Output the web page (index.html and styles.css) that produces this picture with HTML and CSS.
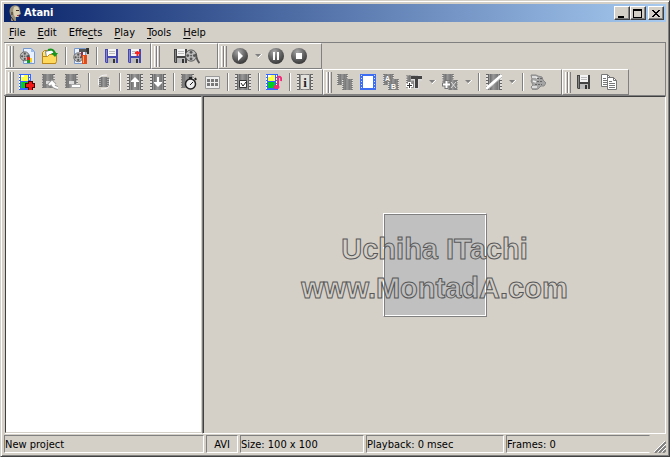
FILE: index.html
```html
<!DOCTYPE html>
<html lang="en">
<head>
<meta charset="utf-8">
<title>Atani</title>
<link rel="stylesheet" href="styles.css">
</head>
<body>
<svg class="defs" aria-hidden="true">
  <defs>
    <linearGradient id="metal"><stop stop-color="#6c6c6c"/><stop offset=".4" stop-color="#999"/><stop offset="1" stop-color="#747474"/></linearGradient>
    <radialGradient id="ball" cx=".4" cy=".25" r=".8"><stop stop-color="#aaa"/><stop offset=".5" stop-color="#686868"/><stop offset="1" stop-color="#333"/></radialGradient>
  </defs>
  <symbol id="film" viewBox="0 0 16 16">
    <path fill="#666" d="M0 0h16v16H0z"/><path fill="url(#metal)" d="M4 0h8v16H4z"/>
    <path stroke="#e4e2de" stroke-width="2" stroke-dasharray="2 1" d="M1 1v15M15 1v15"/>
    <path stroke="#ddd" d="M3.500 0v16M12.500 0v16" stroke-opacity=".4"/>
  </symbol>
  <symbol id="colorfilm" viewBox="0 0 16 16">
    <path fill="#36f" d="M0 0h13v16H0z"/><path fill="#ff4" d="M3 1h7v6H3z"/><path fill="#0c2" d="M3 8h7v6H3z"/>
    <path fill="#fff" d="M3 1h3v2H3z"/>
    <path stroke="#fff" stroke-dasharray="2 1" d="M1.500 1v14M11.500 1v14"/>
  </symbol>
  <symbol id="floppy" viewBox="0 0 16 16">
    <path fill="currentColor" d="M1 1h13v14H2l-1-1z"/><path fill="#f4f4f4" d="M4 1h8v7H4z"/>
    <path stroke="#bbb" d="M5 3.500h6M5 5.500h6"/><path fill="#bbb" d="M4 10h8v5H4z"/><path fill="#333" d="M9 11h2v4H9z"/>
    <path stroke="#fff" stroke-opacity=".35" d="M2.500 2v12"/>
  </symbol>
  <symbol id="reel" viewBox="0 0 16 16">
    <circle cx="7" cy="7" r="6" fill="#bbb" stroke="#555" stroke-width="1"/>
    <g fill="#555"><circle cx="7" cy="3.500" r="1.500"/><circle cx="3.500" cy="7" r="1.500"/><circle cx="10.500" cy="7" r="1.500"/><circle cx="7" cy="10.500" r="1.500"/><circle cx="7" cy="7" r="1"/></g>
    <path d="M12 5q1 7 4 10" stroke="#555" stroke-width="2" fill="none"/>
  </symbol>
  <symbol id="page" viewBox="0 0 16 16">
    <path fill="#fff" stroke="#777" d="M.5.5h6l3 3v9h-9z"/><path fill="none" stroke="#777" d="M6.500.5v3h3M2 4.500h3M2 6.500h6M2 8.500h6M2 10.500h6"/>
  </symbol>
</svg>

<div class="window">
  <header class="titlebar">
    <svg class="app-icon" viewBox="0 0 16 16" aria-hidden="true">
      <path fill="#99917c" d="M3 2Q6-1 10 1q2 1 2 4l1 4-2 1v2H8v4H3V11Q0 6 3 2"/>
      <path fill="#d9d0b4" d="M6 2q4-2 5 2l1 5-2 1v2H7Q4 7 6 2"/>
      <path stroke="#3c2c24" d="M8 5.500h3M3 12l3 4M4 7v3"/><path stroke="#b33" d="M9 10.500h2"/>
    </svg>
    <h1 class="title">Atani</h1>
    <button class="caption" aria-label="Minimize"><svg viewBox="0 0 13 11"><path stroke="#000" stroke-width="2" d="M3 9h6"/></svg></button>
    <button class="caption" aria-label="Maximize"><svg viewBox="0 0 13 11"><path fill="none" stroke="#000" d="M2.500 1.500h8v8h-8zM2 2.500h9"/></svg></button>
    <button class="caption close" aria-label="Close"><svg viewBox="0 0 13 11"><path fill="#000" d="M3 2h2v1h1v1h2V3h1V2h2v1h-1v1H9v1H8v1h1v1h1v1h1v1H9V8H8V7H6v1H5v1H3V8h1V7h1V6h1V5H5V4H4V3H3z"/></svg></button>
  </header>

  <nav class="menu">
    <button><u>F</u>ile</button><button><u>E</u>dit</button><button>Effe<u>c</u>ts</button><button><u>P</u>lay</button><button><u>T</u>ools</button><button><u>H</u>elp</button>
  </nav>

  <div class="toolbars">
    <div class="row">
      <div class="band file-band" role="toolbar" aria-label="Project">
        <button aria-label="New project"><svg viewBox="0 0 16 16"><path fill="#e7f1ff" stroke="#7798cc" d="M4.500.5h8l3 3v12h-11z"/><path fill="#9cbcf0" d="M12 0v4h4"/><use href="#reel" x="0" y="3" width="13" height="12"/><path fill="#e02020" d="M8 9h3v3H8z"/><path fill="#ffd21c" d="M11 10h2v4h-2z"/><path fill="#169b30" d="M8 12h3v3H8z"/></svg></button>
        <button aria-label="Open project"><svg viewBox="0 0 16 16"><path fill="#ffe578" stroke="#b48212" d="M.5 15.500v-11l2-2h4l1 2h6v11z"/><path fill="#fff" stroke="#789" d="M3.500 3.500l7-2 2 6-8 2z"/><path fill="#ffd95c" stroke="#ba8718" d="M.5 15.500v-7h5l2-2h7v7l-1 2z"/><path fill="none" stroke="#16961c" stroke-width="2" d="M6 2q6-2 7 4"/><path fill="#16961c" d="M9 5h7l-3 4z"/></svg></button>
        <i class="sep"></i>
        <button aria-label="Project settings"><svg viewBox="0 0 16 16"><path fill="#edf4ff" stroke="#7798cc" d="M1.500.5h11v15h-11z"/><use href="#reel" x="0" y="4" width="12" height="12"/><path stroke="#555" stroke-width="3" d="M6 2.500h8"/><path fill="#333" d="M13 0h3v6h-2z"/><path stroke="#934" stroke-width="2" d="M9 4v5"/><path fill="#e14b19" d="M9 7h5v9H9z"/><path stroke="#ffb078" d="M10.500 8v7"/></svg></button>
        <i class="sep"></i>
        <button class="blue" aria-label="Save"><svg viewBox="0 0 16 16"><use href="#floppy"/></svg></button>
        <button class="blue" aria-label="Save as"><svg viewBox="0 0 16 16"><use href="#floppy"/><path stroke="#f22" stroke-width="2" d="M8 5h5M10.500 3v5"/></svg></button>
      </div>
      <div class="band export-band" role="toolbar" aria-label="Export">
        <button class="wide" aria-label="Save movie"><svg viewBox="0 0 26 16"><use href="#floppy" x="-1" y="0" width="16" height="16"/><g transform="translate(10 1)"><use href="#reel" width="16" height="15"/></g></svg></button>
      </div>
      <div class="band play-band" role="toolbar" aria-label="Playback">
        <button aria-label="Play"><svg viewBox="0 0 16 16"><circle cx="8" cy="8" r="8" fill="url(#ball)"/><path fill="#fff" d="M6 3l5 5-5 5z"/></svg></button>
        <button class="drop" aria-label="Play options"><svg viewBox="0 0 7 4"><path fill="#808080" d="M0 0h6L3 3z"/><path stroke="#fff" d="M3 4l4-4"/></svg></button>
        <button aria-label="Pause"><svg viewBox="0 0 16 16"><circle cx="8" cy="8" r="8" fill="url(#ball)"/><path stroke="#fff" stroke-width="2" d="M6 4v8M10 4v8"/></svg></button>
        <button aria-label="Stop"><svg viewBox="0 0 16 16"><circle cx="8" cy="8" r="8" fill="url(#ball)"/><path fill="#fff" d="M5 5h6v6H5z"/></svg></button>
      </div>
    </div>
    <div class="row">
      <div class="band frames-band" role="toolbar" aria-label="Frames">
        <button aria-label="Add frame"><svg viewBox="0 0 16 16"><use href="#colorfilm" x="-1"/><path stroke="#500" stroke-width="5" d="M6 11.500h10M11.500 7v9"/><path stroke="#f01818" stroke-width="3" d="M7 11.500h8M11.500 8v8"/></svg></button>
        <button aria-label="Replace frame"><svg viewBox="0 0 16 16"><use href="#film" x="-1" width="14" height="14"/><path fill="#ddd" d="M4 7h6v3H4z"/><path stroke="#999" stroke-width="4" fill="none" d="M7 11l3-3 3 3M10 8q0 5 6 6"/><path stroke="#fff" stroke-width="2" fill="none" d="M7 11l3-3 3 3M10 8q0 5 6 6"/></svg></button>
        <button aria-label="Remove frame"><svg viewBox="0 0 16 16"><use href="#film" x="-1" width="14" height="14"/><path fill="#ddd" d="M4 7h5v3H4z"/><path fill="#fff" stroke="#aaa" d="M6.500 10.500h9v3h-9z"/></svg></button>
        <i class="sep"></i>
        <button aria-label="Rotate frames"><svg viewBox="0 0 16 16"><path fill="#777" d="M3 3h10v10H3z"/><path fill="url(#metal)" d="M5 3h6v10H5z"/><path stroke="#ddd" stroke-dasharray="1 1" d="M4 3v10M12 3v10"/><path fill="none" stroke="#f4f4f4" d="M3 4q1-3 8-3M13 12q-1 3-8 3M2.500 5v6M13.500 5v6"/></svg></button>
        <i class="sep"></i>
        <button aria-label="Move up"><svg viewBox="0 0 16 16"><use href="#film"/><path fill="#fff" d="M8 3l4 4v1H9v5H7V8H4V7z"/></svg></button>
        <button aria-label="Move down"><svg viewBox="0 0 16 16"><use href="#film"/><path fill="#fff" d="M7 3h2v5h3v1l-4 4-4-4V8h3z"/></svg></button>
        <i class="sep"></i>
        <button aria-label="Frame timing"><svg viewBox="0 0 16 16"><use href="#film" x="-1" width="14" height="14"/><path stroke="#222" stroke-width="2" d="M8 4h3M14 4l1 2"/><circle cx="9.500" cy="10" r="5" fill="#eee" stroke="#222" stroke-width="1.500"/><path stroke="#222" d="M9 11l3-3"/></svg></button>
        <button aria-label="Frame grid"><svg viewBox="0 0 16 16"><path fill="#eee" stroke="#999" d="M1.500 2.500h14v12h-14z"/><path stroke="#777" stroke-width="3" stroke-dasharray="3 1" d="M3 6.500h11M3 10.500h11"/></svg></button>
        <i class="sep"></i>
        <button aria-label="Select frames"><svg viewBox="0 0 16 16"><use href="#film"/><path fill="#fff" stroke="#333" d="M4.500 6.500h7v7h-7z"/><path fill="none" stroke="#222" d="M6 9l2 3 3-4"/></svg></button>
        <i class="sep"></i>
        <button aria-label="Sound"><svg viewBox="0 0 16 16"><use href="#colorfilm" x="-1"/><path fill="none" stroke="#f22878" stroke-width="2" d="M12 13V3q4-1 3 4"/><ellipse cx="10.500" cy="13" rx="3" ry="2" fill="#f22878"/></svg></button>
        <i class="sep"></i>
        <button aria-label="Frame information"><svg viewBox="0 0 16 16"><use href="#film"/><path fill="#e4e2dc" d="M4 1h8v14H4z"/><text class="info" x="8" y="13">i</text></svg></button>
      </div>
      <div class="band effects-band" role="toolbar" aria-label="Effects">
        <button aria-label="Duplicate"><svg viewBox="0 0 16 16"><use href="#film" width="11" height="11"/><use href="#film" x="5" y="5" width="11" height="11"/></svg></button>
        <button aria-label="Blank frame"><svg viewBox="0 0 16 16"><path fill="#3d6df2" d="M0 0h16v16H0z"/><path fill="#fff" d="M3 2h10v12H3z"/><path stroke="#d6e0ff" stroke-dasharray="1 2" d="M1.500 1v14M14.500 1v14"/></svg></button>
        <button aria-label="Transition"><svg viewBox="0 0 16 16"><use href="#film" width="11" height="11"/><use href="#film" x="5" y="5" width="11" height="11"/><text class="letter" x="2" y="7">A</text><text class="letter" x="8" y="15">B</text></svg></button>
        <button aria-label="Add text"><svg viewBox="0 0 16 16"><use href="#film" width="12" height="15"/><path stroke="#ddd" stroke-width="5" d="M5 4h11M10.500 3v12"/><path stroke="#444" stroke-width="3" d="M5 3.500h11M10.500 3v11"/><path stroke="#fff" stroke-width="3" d="M0 11.500h7M3.500 8v7"/><path stroke="#333" d="M1 11.500h5M3.500 9v5"/></svg></button>
        <button class="drop" aria-label="Text options"><svg viewBox="0 0 7 4"><path fill="#808080" d="M0 0h6L3 3z"/><path stroke="#fff" d="M3 4l4-4"/></svg></button>
        <button aria-label="Add effect"><svg viewBox="0 0 16 16"><use href="#film" width="12" height="12"/><use href="#film" x="6" y="6" width="10" height="10"/><path stroke="#777" stroke-width="4" d="M0 10.500h9M4.500 6v9"/><path stroke="#fff" stroke-width="2" d="M1 10.500h7M4.500 7v7"/><path stroke="#ddd" d="M9 8l5 6M14 8l-5 6"/></svg></button>
        <button class="drop" aria-label="Effect options"><svg viewBox="0 0 7 4"><path fill="#808080" d="M0 0h6L3 3z"/><path stroke="#fff" d="M3 4l4-4"/></svg></button>
        <i class="sep"></i>
        <button aria-label="Clear effect"><svg viewBox="0 0 16 16"><use href="#film"/><path stroke="#fff" stroke-width="3" d="M0 15L16 1"/><path stroke="#bbb" d="M1 16L16 3"/></svg></button>
        <button class="drop" aria-label="Clear options"><svg viewBox="0 0 7 4"><path fill="#808080" d="M0 0h6L3 3z"/><path stroke="#fff" d="M3 4l4-4"/></svg></button>
        <i class="sep"></i>
        <button aria-label="Palette"><svg viewBox="0 0 16 16"><path fill="#a4a4a4" stroke="#888" d="M1 1h5l2 1 4 1 1 3 3 3-2 3h-3l-3 3-5 1-2-3 2-2-2-4 1-2z"/><path stroke="#eee" stroke-width="1.500" fill="none" d="M2 3h4l2 2M3 7l3 1M2 13h5"/><path stroke="#666" stroke-dasharray="2 1" d="M7 4.500h5M7 7.500h6M5 10.500h7"/></svg></button>
      </div>
      <div class="band clipboard-band" role="toolbar" aria-label="Frame file">
        <button class="dark" aria-label="Save frame"><svg viewBox="0 0 16 16"><use href="#floppy"/></svg></button>
        <button aria-label="Copy frame"><svg viewBox="0 0 16 16"><use href="#page" width="16" height="16"/><use href="#page" x="6" y="3" width="16" height="16"/></svg></button>
      </div>
    </div>
  </div>

  <main class="workspace">
    <section class="frame-list" aria-label="Frame list"></section>
    <section class="stage" aria-label="Preview">
      <div class="canvas"></div>
      <p class="watermark">Uchiha ITachi<br>www.MontadA.com</p>
    </section>
  </main>

  <footer class="status">
    <span class="project">New project</span><span class="format">AVI</span><span class="size">Size: 100 x 100</span><span class="playback">Playback: 0 msec</span><span class="frames">Frames: 0</span>
    <svg class="grip" viewBox="0 0 12 12" aria-hidden="true"><path stroke="#808080" stroke-width="2" d="M1 12L12 1M5 12l7-7M9 12l3-3"/><path stroke="#fff" d="M0 11L11 0M4 11l8-8M8 11l4-4"/></svg>
  </footer>
</div>
</body>
</html>
```

FILE: styles.css
```css
:root {
  --face: #d4d0c8;
  --shadow: #808080;
  --dark: #404040;
}

* { box-sizing: border-box; }

body {
  margin: 0;
  background: var(--face);
  color: #000;
  font: 11px/14px "DejaVu Sans Condensed", "DejaVu Sans", sans-serif;
}

button {
  margin: 0;
  padding: 0;
  border: 0;
  background: none;
  color: inherit;
  font: inherit;
}

svg { display: block; }
.defs { position: absolute; width: 0; height: 0; }

.window {
  display: flex;
  flex-direction: column;
  height: 100vh;
  padding: 2px 2px 1px;
  border: 1px solid var(--dark);
  border-top-color: var(--face);
  border-left-color: var(--face);
  box-shadow: inset 1px 1px #fff, inset -1px -1px var(--shadow);
}

.titlebar {
  display: flex;
  align-items: center;
  height: 18px;
  margin: 1px 1px 0;
  padding-right: 2px;
  background: linear-gradient(90deg, #0a246a, #a6caf0);
}

.app-icon { width: 16px; height: 16px; margin: 0 0 0 4px; }

.title {
  flex: 1;
  margin: 0;
  color: #fff;
  font-size: 11px;
  font-weight: bold;
}

.caption {
  width: 16px;
  height: 14px;
  border: 1px solid var(--dark);
  border-top-color: #fff;
  border-left-color: #fff;
  background: var(--face);
  box-shadow: inset -1px -1px var(--shadow);
}

.caption svg { width: 13px; height: 11px; shape-rendering: crispEdges; }
.close { margin-left: 2px; }

.menu { display: flex; height: 20px; padding-top: 1px; }
.menu button { padding: 0 6px; }
.menu u { text-underline-offset: 2px; }

.toolbars {
  margin-left: 1px;
  margin-right: 1px;
  padding-left: 1px;
  border-top: 1px solid var(--shadow);
  border-right: 1px solid var(--shadow);
  border-bottom: 1px solid var(--shadow);
}

.row { display: flex; height: 26px; }

.band {
  display: flex;
  align-items: center;
  padding-left: 10px;
  border: 1px solid var(--shadow);
  border-top-color: #fff;
  border-left-color: #fff;
  position: relative;
}

.band::before {
  content: "";
  position: absolute;
  left: 2px;
  top: 2px;
  bottom: 1px;
  width: 6px;
  background: linear-gradient(90deg, #fff 1px, var(--face) 1px 2px, var(--shadow) 2px 3px, #fff 3px 4px, var(--face) 4px 5px, var(--shadow) 5px);
}

.band button { width: 23px; padding: 0 3px; }
.band button svg { width: 16px; height: 16px; }
.band .wide { width: 50px; padding: 0 12px; }
.band .wide svg { width: 26px; }
.band .drop { width: 13px; }
.band .drop svg { width: 7px; height: 4px; }
.blue { color: #4648ae; }
.dark, .wide { color: #444; }

.letter {
  fill: #fff;
  stroke: #777;
  stroke-width: 1px;
  paint-order: stroke;
  font: bold 7px "Liberation Sans", sans-serif;
}

.info {
  fill: #222;
  font: bold 13px "Liberation Serif", serif;
  text-anchor: middle;
}

.sep {
  width: 2px;
  height: 18px;
  margin: 0 3px;
  border-left: 1px solid var(--shadow);
  border-right: 1px solid #fff;
}

.file-band { padding-right: 3px; }
.export-band { padding-right: 5px; }
.play-band { padding-right: 10px; }
.frames-band { padding-right: 5px; }
.effects-band { padding-right: 11px; }
.clipboard-band { gap: 2px; padding-right: 7px; }

.workspace {
  flex: 1;
  display: flex;
  gap: 1px;
  min-height: 0;
  margin: 0 1px 0 2px;
}

.frame-list {
  flex: 0 0 197px;
  border: 1px solid var(--face);
  border-top-color: var(--dark);
  border-left-color: var(--dark);
  background: #fff;
  box-shadow: 0 1px #fff;
}

.stage {
  flex: 1;
  display: grid;
  place-items: center;
  border: 1px solid #fff;
  border-top-color: var(--dark);
  border-left-color: var(--dark);
  border-bottom: 0;
  box-shadow: -1px 0 var(--shadow), 0 1px #fff;
}

.canvas, .watermark { grid-area: 1 / 1; }

.canvas {
  width: 104px;
  height: 104px;
  border: 1px solid #fff;
  border-right-color: var(--shadow);
  border-bottom-color: var(--shadow);
  background: #c0c0c0;
  box-shadow: inset 1px 1px var(--shadow), inset -1px -1px #fff;
}

.watermark {
  margin: 0;
  padding-top: 8px;
  color: transparent;
  font: bold 29px/39px "Liberation Sans", Arial, sans-serif;
  text-align: center;
  -webkit-text-stroke: 1px #585858;
}

.status {
  display: flex;
  gap: 2px;
  margin: 2px 1px 0;
  height: 20px;
  padding-bottom: 2px;
}

.status span {
  padding-top: 2px;
  border: 1px solid #fff;
  border-top-color: var(--shadow);
  border-left-color: var(--shadow);
  white-space: nowrap;
}

.status .project { width: 200px; }
.status .format { width: 32px; text-align: center; }
.status .size { width: 124px; }
.status .playback { width: 138px; }
.status .frames { flex: 1; border-right-color: var(--face); }
.grip { width: 12px; height: 12px; margin-left: 2px; align-self: flex-end; }
```
